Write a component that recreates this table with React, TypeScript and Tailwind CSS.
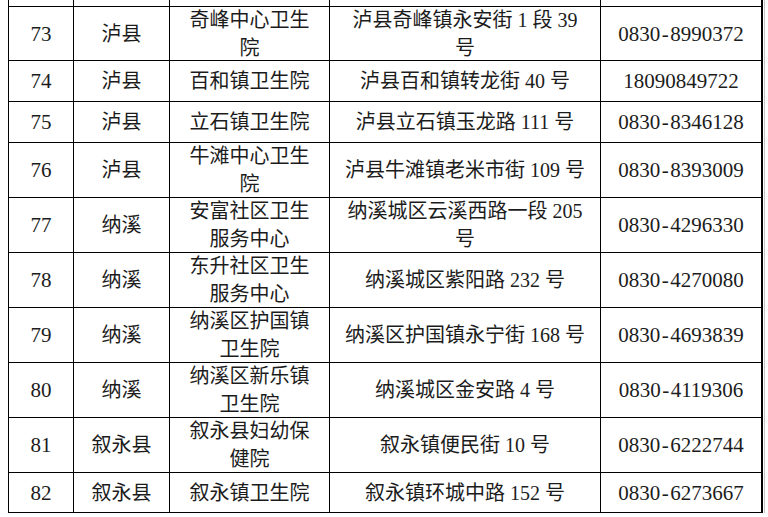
import React from "react";

type Row = {
  no: string;
  county: string;
  name: string[];
  addr: string[];
  phone: string;
  h: string;
};

const rows: Row[] = [
  { no: "73", county: "泸县", name: ["奇峰中心卫生", "院"], addr: ["泸县奇峰镇永安街 1 段 39", "号"], phone: "0830-8990372", h: "h-[54px]" },
  { no: "74", county: "泸县", name: ["百和镇卫生院"], addr: ["泸县百和镇转龙街 40 号"], phone: "18090849722", h: "h-[41px]" },
  { no: "75", county: "泸县", name: ["立石镇卫生院"], addr: ["泸县立石镇玉龙路 111 号"], phone: "0830-8346128", h: "h-[41px]" },
  { no: "76", county: "泸县", name: ["牛滩中心卫生", "院"], addr: ["泸县牛滩镇老米市街 109 号"], phone: "0830-8393009", h: "h-[55px]" },
  { no: "77", county: "纳溪", name: ["安富社区卫生", "服务中心"], addr: ["纳溪城区云溪西路一段 205", "号"], phone: "0830-4296330", h: "h-[55px]" },
  { no: "78", county: "纳溪", name: ["东升社区卫生", "服务中心"], addr: ["纳溪城区紫阳路 232 号"], phone: "0830-4270080", h: "h-[55px]" },
  { no: "79", county: "纳溪", name: ["纳溪区护国镇", "卫生院"], addr: ["纳溪区护国镇永宁街 168 号"], phone: "0830-4693839", h: "h-[55px]" },
  { no: "80", county: "纳溪", name: ["纳溪区新乐镇", "卫生院"], addr: ["纳溪城区金安路 4 号"], phone: "0830-4119306", h: "h-[55px]" },
  { no: "81", county: "叙永县", name: ["叙永县妇幼保", "健院"], addr: ["叙永镇便民街 10 号"], phone: "0830-6222744", h: "h-[55px]" },
  { no: "82", county: "叙永县", name: ["叙永镇卫生院"], addr: ["叙永镇环城中路 152 号"], phone: "0830-6273667", h: "h-[40px]" },
];

const cell =
  "flex flex-col items-center justify-center text-center whitespace-nowrap border-r border-b border-black leading-[28px] min-h-0 overflow-hidden";

function Phone({ value }: { value: string }) {
  const i = value.indexOf("-");
  if (i < 0) return <div>{value}</div>;
  return (
    <div>
      {value.slice(0, i)}
      <span className="mx-[1.5px]">-</span>
      {value.slice(i + 1)}
    </div>
  );
}

export default function App() {
  return (
    <div
      className="w-[768px] h-[517px] bg-white overflow-hidden text-[#1c1c1c] text-[20px]"
      style={{ fontFamily: '"Liberation Serif", "Noto Sans CJK SC", serif' }}
    >
      <div className="flex ml-[8px]">
        <div className="border-l border-black">
          <div className="grid grid-cols-[65px_96px_160px_271px_162px] grid-rows-[7px] h-[7px]">
            <div className="border-r border-b border-black" />
            <div className="border-r border-b border-black" />
            <div className="border-r border-b border-black" />
            <div className="border-r border-b border-black" />
            <div className="border-r-2 border-b border-black" />
          </div>
          {rows.map((r) => (
            <div
              key={r.no}
              className={`grid grid-cols-[65px_96px_160px_271px_162px] grid-rows-[100%] ${r.h}`}
            >
              <div className={`${cell} text-[21px]`}>{r.no}</div>
              <div className={cell}>{r.county}</div>
              <div className={cell}>
                {r.name.map((l, i) => (
                  <div key={i}>{l}</div>
                ))}
              </div>
              <div className={cell}>
                {r.addr.map((l, i) => (
                  <div key={i}>{l}</div>
                ))}
              </div>
              <div className={`${cell} border-r-2 text-[21px]`}>
                <Phone value={r.phone} />
              </div>
            </div>
          ))}
        </div>
        <div className="ml-[1px] w-[1px] bg-[#c4c4c4] self-stretch" />
      </div>
    </div>
  );
}
